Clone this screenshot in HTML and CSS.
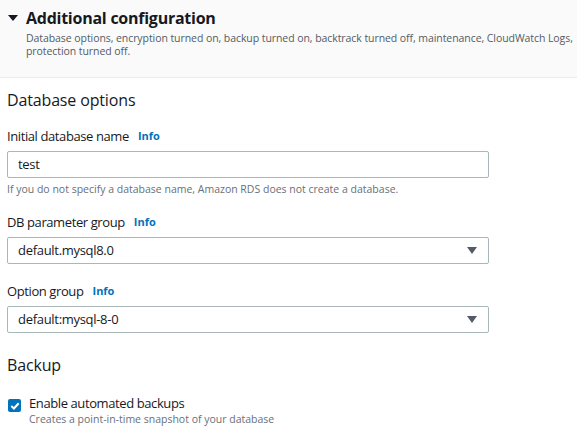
FILE: index.html
```html
<!DOCTYPE html>
<html>
<head>
<meta charset="utf-8">
<link rel="stylesheet" href="styles.css">
</head>
<body>
<div class="header">
  <div class="title-row">
    <span class="caret"></span>
    <h2 class="title">Additional configuration</h2>
  </div>
  <p class="desc">Database options, encryption turned on, backup turned on, backtrack turned off, maintenance, CloudWatch Logs,<br>protection turned off.</p>
</div>
<div class="content">
  <h3 class="section">Database options</h3>
  <div class="field first">
    <div class="label">Initial database name <span class="info">Info</span></div>
    <div class="input">test</div>
    <div class="hint">If you do not specify a database name, Amazon RDS does not create a database.</div>
  </div>
  <div class="field">
    <div class="label">DB parameter group <span class="info">Info</span></div>
    <div class="input select">default.mysql8.0<span class="arrow"></span></div>
  </div>
  <div class="field third">
    <div class="label">Option group <span class="info">Info</span></div>
    <div class="input select">default:mysql-8-0<span class="arrow"></span></div>
  </div>
  <h3 class="section backup">Backup</h3>
  <div class="check-row">
    <span class="checkbox"><svg width="12" height="12" viewBox="0 0 12 12"><path d="M2.3 6.1 L4.9 8.5 L9.7 3.3" fill="none" stroke="#fff" stroke-width="2"/></svg></span>
    <div>
      <div class="check-label">Enable automated backups</div>
      <div class="check-desc">Creates a point-in-time snapshot of your database</div>
    </div>
  </div>
</div>
</body>
</html>
```
FILE: styles.css
```css
* { box-sizing: border-box; }
html, body { margin: 0; padding: 0; background: #fff; }
body { font-family: "Open Sans", "Noto Sans", sans-serif; color: #16191f; width: 577px; overflow: hidden; }
.header { background: #fafafa; border-bottom: 1px solid #eaeded; padding: 7px 0 0 8px; height: 78px; }
.title-row { display: flex; align-items: center; gap: 8px; }
.caret { width: 0; height: 0; border-left: 5px solid transparent; border-right: 5px solid transparent; border-top: 6px solid #16191f; }
.title { margin: 0; font-size: 16px; font-weight: 700; line-height: 22px; letter-spacing: -0.25px; }
.desc { margin: 3px 0 0 18px; font-size: 10.5px; line-height: 13px; color: #545b64; white-space: nowrap; letter-spacing: -0.07px; }
.content { padding: 11px 8px 0 7px; }
.section { margin: 0; font-size: 16px; font-weight: 400; line-height: 22px; letter-spacing: -0.15px; }
.field { margin-top: 17px; }
.field.first { margin-top: 16px; }
.field.third { margin-top: 18px; }
.label { font-size: 13px; line-height: 18px; letter-spacing: -0.4px; display: flex; align-items: center; gap: 9px; }
.info { color: #0073bb; font-weight: 700; font-size: 11px; letter-spacing: 0; }
.input { margin-top: 6px; width: 482px; height: 27px; border: 1px solid #aab7b8; border-radius: 2px; font-size: 13px; letter-spacing: -0.3px; line-height: 25px; padding: 0 10px; position: relative; }
.select .arrow { position: absolute; right: 11px; top: 9px; width: 0; height: 0; border-left: 5px solid transparent; border-right: 5px solid transparent; border-top: 7px solid #545b64; }
.hint { font-size: 10.5px; color: #687078; line-height: 14px; margin-top: 4px; }
.backup { margin-top: 21px; }
.check-row { display: flex; gap: 8px; margin-top: 19px; padding-left: 1px; }
.checkbox { flex: none; width: 13px; height: 13px; background: #0073bb; border-radius: 2px; display: flex; align-items: center; justify-content: center; margin-top: 4px; }
.check-label { font-size: 13px; line-height: 17px; letter-spacing: -0.4px; }
.check-desc { font-size: 10.5px; color: #687078; line-height: 14px; }
```
